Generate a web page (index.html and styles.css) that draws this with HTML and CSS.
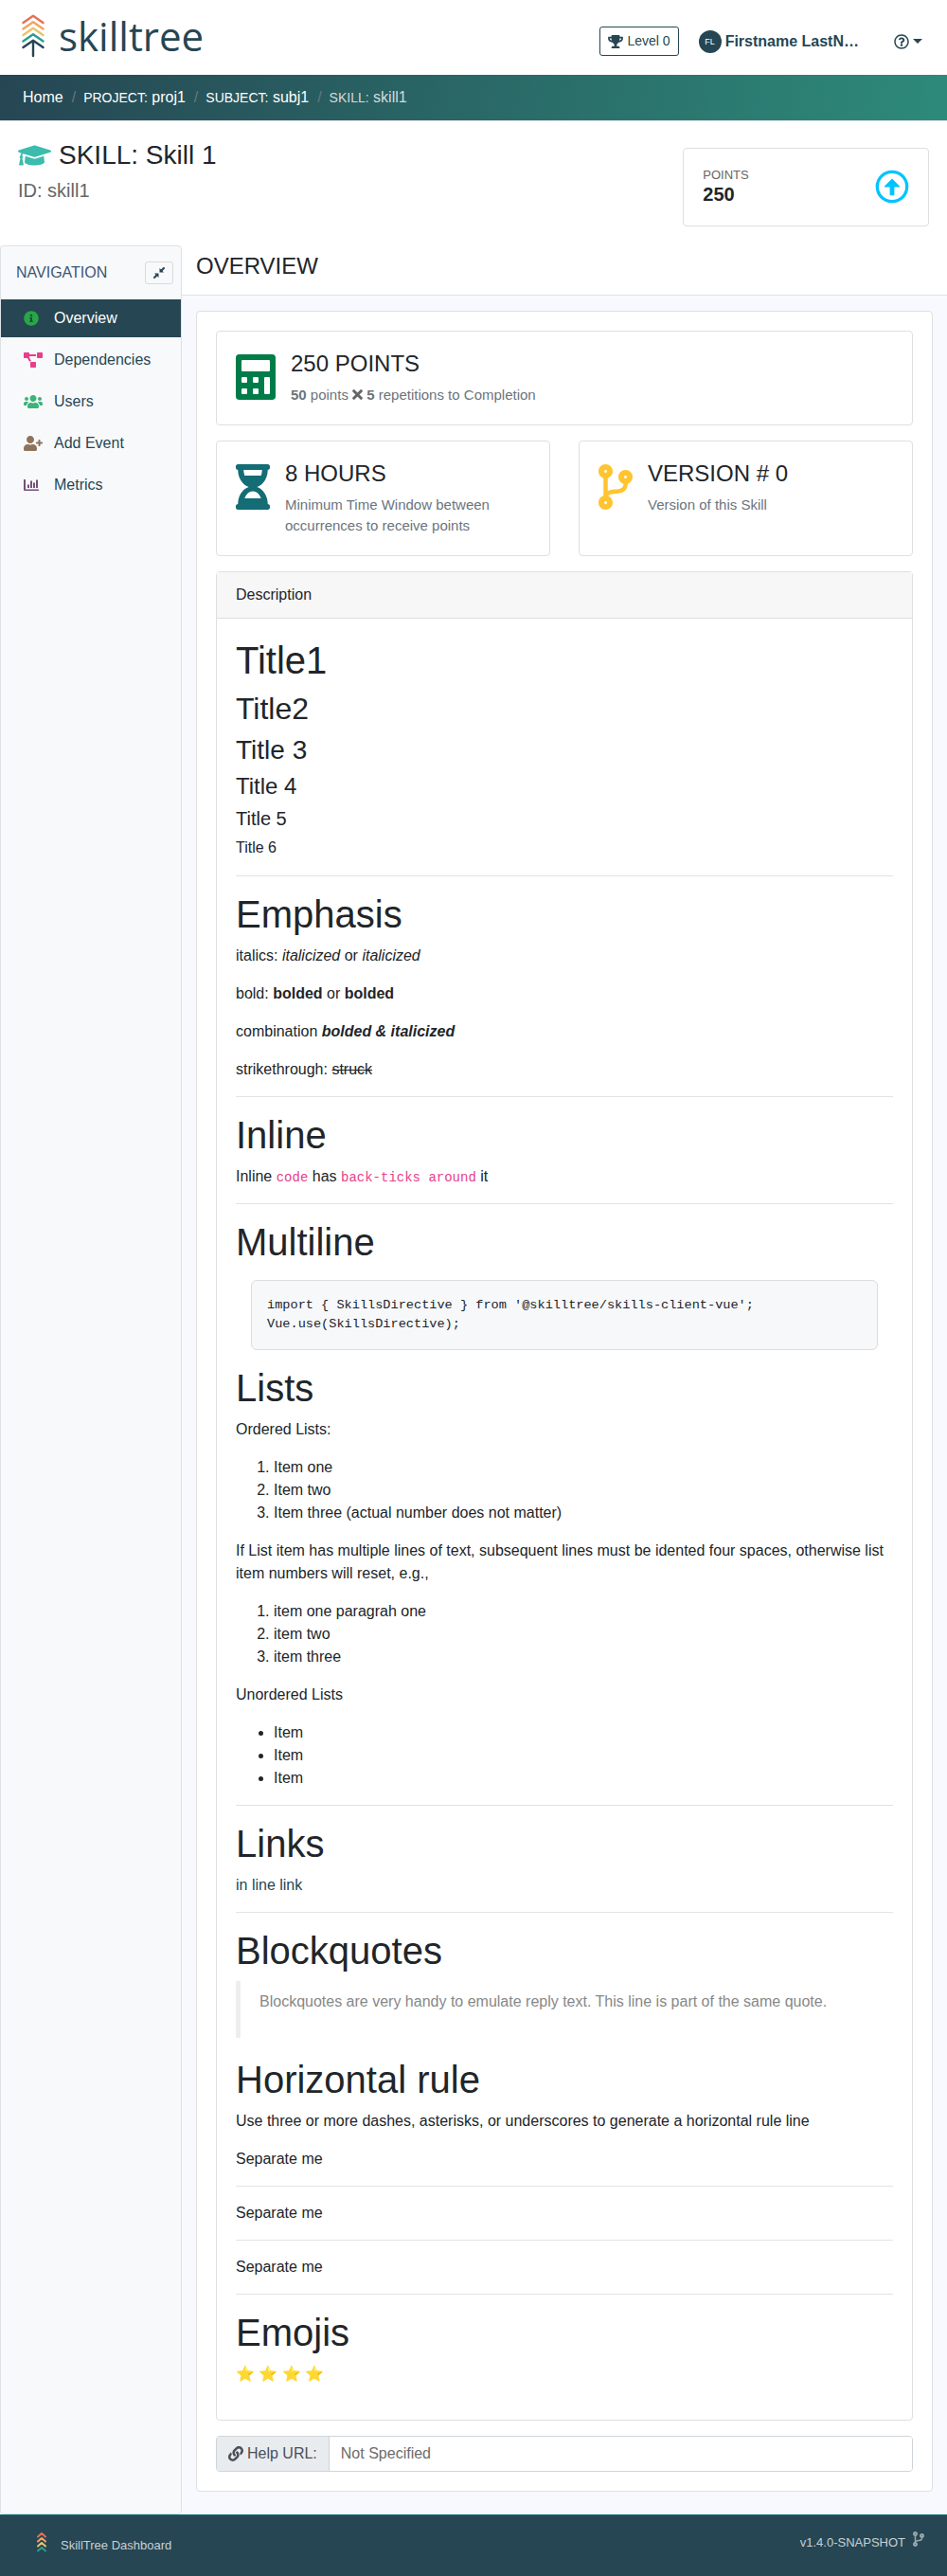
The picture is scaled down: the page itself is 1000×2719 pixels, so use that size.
FILE: index.html
```html
<!DOCTYPE html>
<html lang="en">
<head>
<meta charset="utf-8">
<meta name="viewport" content="width=device-width, initial-scale=1">
<title>SkillTree Dashboard</title>
<link rel="stylesheet" href="styles.css">
</head>
<body>
<svg class="sprite" aria-hidden="true">
  <symbol id="branch" viewBox="0 0 384 512"><path d="M384 144c0-44.200-35.800-80-80-80s-80 35.800-80 80c0 36.400 24.300 67.100 57.500 76.800-.6 16.100-4.200 28.500-11 36.900-15.400 19.200-49.300 22.400-85.200 25.700-28.200 2.600-57.400 5.400-81.300 16.900v-144c32.500-10.200 56-40.500 56-76.300 0-44.200-35.800-80-80-80S0 35.800 0 80c0 35.800 23.500 66.100 56 76.300v199.300C23.500 365.900 0 396.200 0 432c0 44.200 35.800 80 80 80s80-35.800 80-80c0-34-21.200-63.100-51.200-74.600 3.100-5.200 7.800-9.800 14.900-13.400 16.200-8.200 40.400-10.400 66.100-12.800 42.200-3.900 90-8.400 118.200-43.400 14-17.400 21.100-39.800 21.600-67.900 31.600-10.800 54.400-40.700 54.400-75.900zM80 64c8.800 0 16 7.200 16 16s-7.200 16-16 16-16-7.200-16-16 7.200-16 16-16zm0 384c-8.800 0-16-7.200-16-16s7.200-16 16-16 16 7.200 16 16-7.200 16-16 16zm224-320c8.800 0 16 7.200 16 16s-7.200 16-16 16-16-7.200-16-16 7.200-16 16-16z"/></symbol>
</svg>

<header class="topbar">
  <a class="brand" href="#" aria-label="skilltree home">
    <svg class="brand-tree" width="24" height="46" viewBox="0 0 24 46" fill="none" stroke-width="2.400" stroke-linecap="round" stroke-linejoin="round" aria-hidden="true">
      <path stroke="#e76f51" d="M1.500 9L12 1.800 22.500 9"/>
      <path stroke="#f4a261" d="M1.500 15.500L12 8.300 22.500 15.500"/>
      <path stroke="#e9c46a" d="M1.500 22L12 14.800 22.500 22"/>
      <path stroke="#2a9d8f" d="M1.500 28.500L12 21.300 22.500 28.500"/>
      <path stroke="#264653" d="M1.500 35L12 27.800 22.500 35M12 28v16"/>
    </svg>
    <span class="brand-name">skilltree</span>
  </a>
  <div class="user-tools">
    <button class="level-btn" type="button">
      <svg width="16" height="14" viewBox="0 0 576 512" fill="currentColor" aria-hidden="true"><path d="M552 64H448V24c0-13.300-10.700-24-24-24H152c-13.300 0-24 10.700-24 24v40H24C10.700 64 0 74.700 0 88v56c0 35.700 22.500 72.400 61.900 100.700 31.500 22.700 69.800 37.100 110 41.700C203.300 338.500 240 360 240 360v72h-48c-35.300 0-64 20.700-64 56v12c0 6.600 5.400 12 12 12h296c6.600 0 12-5.400 12-12v-12c0-35.300-28.700-56-64-56h-48v-72s36.700-21.500 68.100-73.600c40.300-4.600 78.600-19 110-41.700 39.300-28.300 61.900-65 61.900-100.700V88c0-13.300-10.700-24-24-24zM99.300 192.800C74.900 175.200 64 155.600 64 144v-16h64.200c1 32.600 5.800 61.200 12.800 86.200-15.100-5.200-29.200-12.400-41.700-21.400zM512 144c0 16.100-17.700 36.100-35.300 48.800-12.500 9-26.700 16.200-41.800 21.400 7-25 11.800-53.600 12.800-86.200H512v16z"/></svg>
      Level 0
    </button>
    <button class="user-btn" type="button"><span class="avatar">FL</span>Firstname LastN…</button>
    <button class="help-btn" type="button" aria-label="Help">
      <svg width="16" height="16" viewBox="0 0 512 512" fill="currentColor" aria-hidden="true"><path d="M256 8C119.043 8 8 119.083 8 256c0 136.997 111.043 248 248 248s248-111.003 248-248C504 119.083 392.957 8 256 8zm0 448c-110.532 0-200-89.431-200-200 0-110.495 89.472-200 200-200 110.491 0 200 89.471 200 200 0 110.530-89.431 200-200 200zm107.244-255.200c0 67.052-72.421 68.084-72.421 92.863V300c0 6.627-5.373 12-12 12h-45.647c-6.627 0-12-5.373-12-12v-8.659c0-35.745 27.100-50.034 47.579-61.516 17.561-9.845 28.324-16.541 28.324-29.579 0-17.246-21.999-28.693-39.784-28.693-23.189 0-33.894 10.977-48.942 29.969-4.057 5.120-11.460 6.071-16.666 2.124l-27.824-21.098c-5.107-3.872-6.251-11.066-2.644-16.363C184.846 131.491 214.940 112 261.794 112c49.071 0 101.450 38.304 101.450 88.800zM298 368c0 23.159-18.841 42-42 42s-42-18.841-42-42 18.841-42 42-42 42 18.841 42 42z"/></svg>
      <span class="caret"></span>
    </button>
  </div>
</header>

<nav class="crumbs" aria-label="Breadcrumb">
  <ol>
    <li><a href="#">Home</a></li>
    <li><a href="#"><small>PROJECT:</small> proj1</a></li>
    <li><a href="#"><small>SUBJECT:</small> subj1</a></li>
    <li class="current" aria-current="page"><small>SKILL:</small> skill1</li>
  </ol>
</nav>

<section class="page-head">
  <div>
    <h1 class="page-title">
      <svg width="35" height="28" viewBox="0 0 640 512" fill="#3cbcad" aria-hidden="true"><path d="M622.340 153.200L343.400 67.500c-15.200-4.670-31.600-4.670-46.790 0L17.660 153.200c-23.540 7.230-23.540 38.360 0 45.590l48.630 14.940c-10.670 13.190-17.230 29.280-17.880 46.900C38.780 266.150 32 276.110 32 288c0 10.780 5.680 19.850 13.860 25.650L20.330 428.530C18.110 438.520 25.710 448 35.940 448h56.110c10.240 0 17.840-9.480 15.620-19.470L82.140 313.650C90.320 307.850 96 298.780 96 288c0-11.570-6.470-21.250-15.660-26.870.76-15.020 8.440-28.300 20.690-36.720L296.600 284.500c9.060 2.780 26.440 6.250 46.790 0l278.950-85.700c23.550-7.240 23.550-38.360 0-45.600zM352.790 315.090c-28.530 8.760-52.840 3.920-65.590 0l-145.020-44.550L128 384c0 35.350 85.960 64 192 64s192-28.650 192-64l-14.180-113.470-145.030 44.560z"/></svg>
      SKILL: Skill 1
    </h1>
    <p class="page-id">ID: skill1</p>
  </div>
  <div class="points-card">
    <div>
      <div class="points-label">POINTS</div>
      <div class="points-value">250</div>
    </div>
    <svg width="36" height="36" viewBox="0 0 36 36" aria-hidden="true"><circle cx="18" cy="18" r="15.700" fill="none" stroke="#00c4ff" stroke-width="3.300"/><path fill="#00c4ff" d="M18 9.500l8 8v1h-5.600v8q0 .8-.8.800h-3.200q-.8 0-.8-.8v-8H10v-1z"/></svg>
  </div>
</section>

<div class="layout">
  <aside class="sidebar">
    <div class="sidebar-head">
      <span>NAVIGATION</span>
      <button class="collapse-btn" type="button" aria-label="Collapse navigation">
        <svg width="12" height="12" viewBox="0 0 12 12" fill="#264653" stroke="#264653" stroke-width="2" aria-hidden="true"><path d="M11.600.4L8 4M.4 11.600L4 8"/><path stroke="none" d="M6.500 1v4.500H11L9.600 4 8 2.400zM5.500 11V6.500H1L2.400 8 4 9.600z"/></svg>
      </button>
    </div>
    <nav>
      <ul class="menu">
        <li><a class="active" href="#"><span class="menu-icon"><svg width="16" height="16" viewBox="0 0 512 512" fill="#28a745" aria-hidden="true"><path d="M256 8C119.043 8 8 119.083 8 256c0 136.997 111.043 248 248 248s248-111.003 248-248C504 119.083 392.957 8 256 8zm0 110c23.196 0 42 18.804 42 42s-18.804 42-42 42-42-18.804-42-42 18.804-42 42-42zm56 254c0 6.627-5.373 12-12 12h-88c-6.627 0-12-5.373-12-12v-24c0-6.627 5.373-12 12-12h12v-64h-12c-6.627 0-12-5.373-12-12v-24c0-6.627 5.373-12 12-12h64c6.627 0 12 5.373 12 12v100h12c6.627 0 12 5.373 12 12v24z"/></svg></span>Overview</a></li>
        <li><a href="#"><span class="menu-icon"><svg width="20" height="16" viewBox="0 0 640 512" fill="#e83e8c" aria-hidden="true"><path d="M384 320H256c-17.670 0-32 14.330-32 32v128c0 17.670 14.330 32 32 32h128c17.670 0 32-14.330 32-32V352c0-17.670-14.330-32-32-32zM192 32c0-17.670-14.330-32-32-32H32C14.330 0 0 14.330 0 32v128c0 17.670 14.330 32 32 32h95.720l73.160 128.040C211.980 300.980 232.400 288 256 288h.28L192 175.510V128h224V64H192V32zM608 0H480c-17.670 0-32 14.330-32 32v128c0 17.670 14.330 32 32 32h128c17.670 0 32-14.330 32-32V32c0-17.670-14.330-32-32-32z"/></svg></span>Dependencies</a></li>
        <li><a href="#"><span class="menu-icon"><svg width="20" height="16" viewBox="0 0 640 512" fill="#3cb37a" aria-hidden="true"><path d="M96 224c35.300 0 64-28.700 64-64s-28.700-64-64-64-64 28.700-64 64 28.700 64 64 64zm448 0c35.300 0 64-28.700 64-64s-28.700-64-64-64-64 28.700-64 64 28.700 64 64 64zm32 32h-64c-17.600 0-33.500 7.100-45.100 18.600 40.300 22.100 68.900 62 75.100 109.400h66c17.700 0 32-14.300 32-32v-32c0-35.300-28.700-64-64-64zm-256 0c61.900 0 112-50.100 112-112S381.900 32 320 32 208 82.100 208 144s50.100 112 112 112zm76.800 32h-8.300c-20.800 10-43.900 16-68.500 16s-47.600-6-68.500-16h-8.300C179.600 288 128 339.600 128 403.200V432c0 26.500 21.500 48 48 48h288c26.500 0 48-21.500 48-48v-28.800c0-63.600-51.600-115.200-115.200-115.200zm-223.700-13.400C161.500 263.100 145.600 256 128 256H64c-35.300 0-64 28.700-64 64v32c0 17.700 14.300 32 32 32h65.900c6.300-47.400 34.900-87.300 75.200-109.400z"/></svg></span>Users</a></li>
        <li><a href="#"><span class="menu-icon"><svg width="20" height="16" viewBox="0 0 640 512" fill="#8e735b" aria-hidden="true"><path d="M624 208h-64v-64c0-8.800-7.200-16-16-16h-32c-8.800 0-16 7.200-16 16v64h-64c-8.800 0-16 7.200-16 16v32c0 8.800 7.200 16 16 16h64v64c0 8.800 7.200 16 16 16h32c8.800 0 16-7.200 16-16v-64h64c8.800 0 16-7.200 16-16v-32c0-8.800-7.200-16-16-16zm-400 48c70.700 0 128-57.300 128-128S294.700 0 224 0 96 57.300 96 128s57.300 128 128 128zm89.600 32h-16.700c-22.200 10.200-46.900 16-72.900 16s-50.600-5.800-72.900-16h-16.700C60.200 288 0 348.200 0 422.400V464c0 26.500 21.500 48 48 48h352c26.500 0 48-21.500 48-48v-41.600c0-74.200-60.200-134.400-134.400-134.400z"/></svg></span>Add Event</a></li>
        <li><a href="#"><span class="menu-icon"><svg width="16" height="16" viewBox="0 0 16 16" fill="#774f78" aria-hidden="true"><path d="M.5 2h1q.5 0 .5.500V12.500h13.500q.5 0 .5.500v.5q0 .5-.5.500H1q-1 0-1-1V2.500Q0 2 .5 2zM4 7.500h2V11H4zM7 3.500h2V11H7zM10 5.500h2V11h-2zM13 2.500h2V11h-2z"/></svg></span>Metrics</a></li>
      </ul>
    </nav>
  </aside>

  <main class="main">
    <div class="main-head"><h2>OVERVIEW</h2></div>
    <div class="panel">
      <div class="stats">
        <section class="card stat wide">
          <svg width="42" height="48" viewBox="0 0 448 512" fill="#007c49" aria-hidden="true"><path fill-rule="evenodd" d="M40 0H408Q448 0 448 40V472Q448 512 408 512H40Q0 512 0 472V40Q0 0 40 0zM76 64q-12 0-12 12V180q0 12 12 12H372q12 0 12-12V76q0-12-12-12zM76 256q-12 0-12 12v40q0 12 12 12h40q12 0 12-12v-40q0-12-12-12zM204 256q-12 0-12 12v40q0 12 12 12h40q12 0 12-12v-40q0-12-12-12zM76 384q-12 0-12 12v40q0 12 12 12h40q12 0 12-12v-40q0-12-12-12zM204 384q-12 0-12 12v40q0 12 12 12h40q12 0 12-12v-40q0-12-12-12zM332 256q-12 0-12 12v168q0 12 12 12h40q12 0 12-12V268q0-12-12-12z"/></svg>
          <div>
            <h3>250 POINTS</h3>
            <p><strong>50</strong> points <svg width="11" height="11" viewBox="0 0 11 11" stroke="#666" stroke-width="3" stroke-linecap="round" role="img" aria-label="times"><path d="M1.700 1.700l7.600 7.600M9.300 1.700L1.700 9.300"/></svg> <strong>5</strong> repetitions to Completion</p>
          </div>
        </section>
        <section class="card stat">
          <svg width="36" height="48" viewBox="0 0 384 512" fill="#146c75" aria-hidden="true"><path d="M360 0H24C10.745 0 0 10.745 0 24v16c0 13.255 10.745 24 24 24 0 90.965 51.016 167.734 120.842 192C75.016 280.266 24 357.035 24 448c-13.255 0-24 10.745-24 24v16c0 13.255 10.745 24 24 24h336c13.255 0 24-10.745 24-24v-16c0-13.255-10.745-24-24-24 0-90.965-51.016-167.734-120.842-192C308.984 231.734 360 154.965 360 64c13.255 0 24-10.745 24-24V24c0-13.255-10.745-24-24-24zm-75.078 384H99.080c17.059-46.797 52.096-80 92.920-80 40.821 0 75.862 33.196 92.922 80zm.019-256H99.078C91.988 108.548 88 86.748 88 64h208c0 22.805-3.987 44.587-11.059 64z"/></svg>
          <div>
            <h3>8 HOURS</h3>
            <p>Minimum Time Window between occurrences to receive points</p>
          </div>
        </section>
        <section class="card stat">
          <svg width="36" height="48" fill="#ffc42e" aria-hidden="true"><use href="#branch"/></svg>
          <div>
            <h3>VERSION # 0</h3>
            <p>Version of this Skill</p>
          </div>
        </section>
      </div>

      <section class="card">
        <div class="card-head">Description</div>
        <div class="markdown">
          <h1>Title1</h1>
          <h2>Title2</h2>
          <h3>Title 3</h3>
          <h4>Title 4</h4>
          <h5>Title 5</h5>
          <h6>Title 6</h6>
          <hr>
          <h1>Emphasis</h1>
          <p>italics: <em>italicized</em> or <em>italicized</em></p>
          <p>bold: <strong>bolded</strong> or <strong>bolded</strong></p>
          <p>combination <strong><em>bolded &amp; italicized</em></strong></p>
          <p>strikethrough: <del>struck</del></p>
          <hr>
          <h1>Inline</h1>
          <p>Inline <code>code</code> has <code>back-ticks around</code> it</p>
          <hr>
          <h1>Multiline</h1>
          <pre>import { SkillsDirective } from '@skilltree/skills-client-vue';
Vue.use(SkillsDirective);</pre>
          <h1>Lists</h1>
          <p>Ordered Lists:</p>
          <ol>
            <li>Item one</li>
            <li>Item two</li>
            <li>Item three (actual number does not matter)</li>
          </ol>
          <p>If List item has multiple lines of text, subsequent lines must be idented four spaces, otherwise list item numbers will reset, e.g.,</p>
          <ol>
            <li>item one paragrah one</li>
            <li>item two</li>
            <li>item three</li>
          </ol>
          <p>Unordered Lists</p>
          <ul>
            <li>Item</li>
            <li>Item</li>
            <li>Item</li>
          </ul>
          <hr>
          <h1>Links</h1>
          <p><a href="#">in line link</a></p>
          <hr>
          <h1>Blockquotes</h1>
          <blockquote><p>Blockquotes are very handy to emulate reply text. This line is part of the same quote.</p></blockquote>
          <h1>Horizontal rule</h1>
          <p>Use three or more dashes, asterisks, or underscores to generate a horizontal rule line</p>
          <p>Separate me</p>
          <hr>
          <p>Separate me</p>
          <hr>
          <p>Separate me</p>
          <hr>
          <h1>Emojis</h1>
          <p>⭐ ⭐ ⭐ ⭐</p>
        </div>
      </section>

      <div class="url-group">
        <label for="help-url">
          <svg width="16" height="16" viewBox="0 0 512 512" fill="currentColor" aria-hidden="true"><path d="M326.612 185.391c59.747 59.809 58.927 155.698.36 214.590-.11.120-.24.250-.36.370l-67.200 67.200c-59.270 59.270-155.699 59.262-214.960 0-59.270-59.260-59.270-155.700 0-214.960l37.106-37.106c9.840-9.840 26.786-3.300 27.294 10.606.648 17.722 3.826 35.527 9.690 52.721 1.986 5.822.567 12.262-3.783 16.612l-13.087 13.087c-28.026 28.026-28.905 73.660-1.155 101.960 28.024 28.579 74.086 28.749 102.325.510l67.200-67.190c28.191-28.191 28.073-73.757 0-101.830-3.701-3.694-7.429-6.564-10.341-8.569a16.037 16.037 0 0 1-6.947-12.606c-.396-10.567 3.348-21.456 11.698-29.806l21.054-21.055c5.521-5.521 14.182-6.199 20.584-1.731a152.482 152.482 0 0 1 20.522 17.197zM467.547 44.449c-59.261-59.262-155.690-59.270-214.960 0l-67.200 67.200c-.12.120-.25.250-.36.370-58.566 58.892-59.387 154.781.36 214.590a152.454 152.454 0 0 0 20.521 17.196c6.402 4.468 15.064 3.789 20.584-1.731l21.054-21.055c8.350-8.350 12.094-19.239 11.698-29.806a16.037 16.037 0 0 0-6.947-12.606c-2.912-2.005-6.640-4.875-10.341-8.569-28.073-28.073-28.191-73.639 0-101.830l67.200-67.190c28.239-28.239 74.300-28.069 102.325.510 27.750 28.300 26.872 73.934-1.155 101.960l-13.087 13.087c-4.350 4.350-5.769 10.790-3.783 16.612 5.864 17.194 9.042 34.999 9.690 52.721.509 13.906 17.454 20.446 27.294 10.606l37.106-37.106c59.271-59.259 59.271-155.699.001-214.959z"/></svg>
          Help URL:
        </label>
        <input id="help-url" type="text" value="Not Specified" readonly>
      </div>
    </div>
  </main>
</div>

<footer class="footer">
  <div class="footer-brand">
    <svg width="12" height="22" viewBox="0 0 12 22" fill="none" stroke-width="2" stroke-linecap="round" stroke-linejoin="round" aria-hidden="true">
      <path stroke="#e76f51" d="M2 5.500l4-3.500 4 3.500"/>
      <path stroke="#f4a261" d="M2 10.500l4-3.500 4 3.500"/>
      <path stroke="#e9c46a" d="M2 15.500l4-3.500 4 3.500"/>
      <path stroke="#2a9d8f" d="M2 20.500l4-3.500 4 3.500"/>
    </svg>
    <span>SkillTree Dashboard</span>
  </div>
  <div class="footer-version">
    v1.4.0-SNAPSHOT
    <svg width="12" height="16" fill="#9aa8ae" aria-hidden="true"><use href="#branch"/></svg>
  </div>
</footer>
</body>
</html>
```
FILE: styles.css
```css
* { box-sizing: border-box; }

body {
  margin: 0;
  background: #fff;
  color: #212529;
  font-family: "Liberation Sans", Arial, sans-serif;
  font-size: 16px;
  line-height: 24px;
}

h1, h2, h3, h4, h5, h6, p { margin: 0; font-weight: 400; }
svg { flex: none; }
a { color: #264653; text-decoration: none; }
button { font: inherit; color: #264653; background: none; border: 0; padding: 0; cursor: pointer; }
.sprite { display: none; }

/* Top bar */
.topbar {
  display: flex;
  justify-content: space-between;
  align-items: flex-start;
  padding: 15px 26px 18px 23px;
}
.brand { display: flex; gap: 15px; }
.brand-name {
  font-family: "Open Sans", "Noto Sans", sans-serif;
  font-size: 42px;
  line-height: 46px;
}
.user-tools { display: flex; align-items: center; padding-top: 13px; }
.level-btn {
  display: flex;
  align-items: center;
  gap: 4px;
  padding: 4px 8px;
  border: 1px solid #264653;
  border-radius: 3px;
  font-size: 14px;
  line-height: 21px;
}
.user-btn {
  display: flex;
  align-items: center;
  gap: 4px;
  margin-left: 21px;
  font-weight: 700;
}
.avatar {
  width: 24px;
  height: 24px;
  border-radius: 50%;
  background: #264653;
  color: #fff;
  font-size: 9px;
  font-weight: 400;
  text-align: center;
}
.help-btn { display: flex; align-items: center; gap: 4px; margin-left: 37px; }
.caret { border: 5px solid transparent; border-top-color: #264653; border-bottom: 0; }

/* Breadcrumb */
.crumbs {
  padding: 12px 24px;
  border-bottom: 1px solid #dee2e6;
  background: linear-gradient(100deg, #264653, #2d8a7a);
}
.crumbs ol { display: flex; margin: 0; padding: 0; list-style: none; }
.crumbs a { color: #fff; }
.crumbs small { font-size: 14px; }
.crumbs li + li::before { content: "/"; padding: 0 8px 0 9px; color: #6c757d; }
.crumbs .current { color: #d3dbdb; }

/* Page heading */
.page-head {
  display: flex;
  justify-content: space-between;
  align-items: flex-start;
  padding: 19px 19px 20px;
}
.page-title {
  display: flex;
  align-items: center;
  gap: 8px;
  margin-bottom: 8px;
  font-size: 28px;
  line-height: 34px;
}
.page-id { color: #666; font-size: 20px; }
.points-card {
  display: flex;
  justify-content: space-between;
  align-items: center;
  width: 27%;
  margin-top: 9px;
  padding: 19px 20px 21px;
  border: 1px solid #dfdfdf;
  border-radius: 4px;
}
.points-label { color: #666; font-size: 13px; line-height: 17px; }
.points-value { font-size: 20px; font-weight: 700; }

/* Two-column layout */
.layout { display: flex; background: #f8f9fe; }
.sidebar {
  flex: 0 0 192px;
  border: 1px solid #dee2e6;
  border-radius: 4px;
  background: #f8f9fb;
}
.sidebar-head {
  display: flex;
  justify-content: space-between;
  align-items: center;
  padding: 16px 8px 16px 16px;
  color: #3d5573;
}
.collapse-btn {
  display: flex;
  justify-content: center;
  align-items: center;
  width: 30px;
  height: 24px;
  border: 1px solid #d8dadd;
  border-radius: 3px;
}
.menu { display: grid; gap: 4px; margin: 0; padding: 0; list-style: none; }
.menu a { display: flex; align-items: center; padding: 8px 24px; }
.menu a.active { background: #264653; color: #fff; }
.menu-icon { display: flex; width: 32px; }

.main { flex: 1; min-width: 0; padding-bottom: 24px; }
.main-head { padding: 8px 15px 16px; border-bottom: 1px solid #dee2e6; background: #fff; }
.main-head h2 { font-size: 24px; line-height: 28px; }
.panel {
  display: flex;
  flex-direction: column;
  gap: 16px;
  margin: 16px 15px 0;
  padding: 20px;
  border: 1px solid #dfdfdf;
  border-radius: 4px;
  background: #fff;
}
.card { border: 1px solid #dfdfdf; border-radius: 4px; background: #fff; }

/* Stat cards */
.stats { display: grid; grid-template-columns: 1fr 1fr; gap: 16px 30px; }
.wide { grid-column: 1 / -1; }
.stat { display: flex; align-items: flex-start; gap: 16px; padding: 20px; }
.stat > svg { margin-top: 4px; }
.stat h3 { margin-bottom: 8px; font-size: 24px; line-height: 28px; }
.stat p { color: #6c757d; font-size: 15px; line-height: 22px; }

/* Description */
.card-head { padding: 12px 20px; border-bottom: 1px solid #dfdfdf; background: #f7f7f7; }
.markdown { padding: 20px; }
.markdown h1 { margin-bottom: 8px; font-size: 40px; line-height: 48px; }
.markdown h2 { margin-bottom: 8px; font-size: 32px; line-height: 38px; }
.markdown h3 { margin-bottom: 8px; font-size: 28px; line-height: 33px; }
.markdown h4 { margin-bottom: 8px; font-size: 24px; line-height: 28px; }
.markdown h5 { margin-bottom: 8px; font-size: 20px; line-height: 24px; }
.markdown h6 { margin-bottom: 18px; font-size: 16px; line-height: 22px; }
.markdown p, .markdown ul, .markdown ol { margin: 0 0 16px; }
.markdown ul, .markdown ol { padding-left: 40px; }
.markdown hr { margin: 16px 0; border: 0; border-top: 1px solid #e3e3e3; }
.markdown code {
  color: #e83e8c;
  font-family: "Liberation Mono", monospace;
  font-size: 14px;
  line-height: 16px;
}
.markdown pre {
  margin: 16px;
  padding: 16px;
  border: 1px solid #dcdee0;
  border-radius: 6px;
  background: #f7f8fa;
  font-family: "Liberation Mono", monospace;
  font-size: 85%;
  line-height: 20px;
  overflow-x: auto;
}
.markdown blockquote {
  margin: 0 0 20px;
  padding: 10px 20px;
  border-left: 5px solid #eee;
  color: #888;
}

/* Help URL */
.url-group { display: flex; border: 1px solid #ced4da; border-radius: 4px; overflow: hidden; }
.url-group label {
  display: flex;
  align-items: center;
  gap: 4px;
  padding: 6px 12px;
  border-right: 1px solid #ced4da;
  background: #e9ecef;
  color: #495057;
}
.url-group input {
  flex: 1;
  min-width: 0;
  padding: 6px 12px;
  border: 0;
  background: #fff;
  color: #6c6c6c;
  font: inherit;
}

/* Footer */
.footer {
  display: flex;
  justify-content: space-between;
  align-items: flex-start;
  padding: 17px 24px 20px 38px;
  border-top: 1px solid #146c75;
  background: #264653;
  color: #c8d0d3;
  font-size: 13px;
}
.footer-brand { display: flex; align-items: flex-start; gap: 14px; }
.footer-brand span { padding-top: 3px; }
.footer-version { display: flex; gap: 8px; }
```
